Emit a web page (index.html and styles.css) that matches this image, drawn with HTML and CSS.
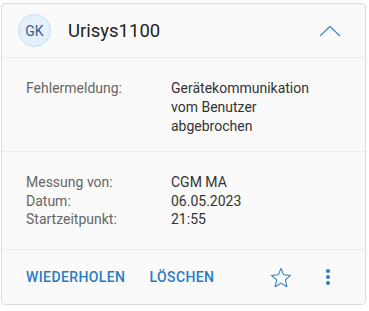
FILE: index.html
```html
<!DOCTYPE html>
<html lang="de">
<head>
 <meta charset="UTF-8">
 <title>Urisys1100</title>
 <link rel="stylesheet" href="styles.css">
</head>
<body>
 <div class="card">
  <div class="card-head">
   <span class="avatar">GK</span>
   <span class="title">Urisys1100</span>
   <svg class="chevron" width="22" height="12" viewBox="0 0 22 12"><path d="M1 11 L11 1.5 L21 11" fill="none" stroke="#4a8fd0" stroke-width="1.4"/></svg>
  </div>
  <div class="section error">
   <span class="label">Fehlermeldung:</span>
   <span class="value">Gerätekommunikation vom Benutzer abgebrochen</span>
  </div>
  <div class="section info">
   <span class="label">Messung von:</span><span class="value">CGM MA</span>
   <span class="label">Datum:</span><span class="value">06.05.2023</span>
   <span class="label">Startzeitpunkt:</span><span class="value">21:55</span>
  </div>
  <div class="card-actions">
   <a class="btn" href="#">WIEDERHOLEN</a>
   <a class="btn" href="#">LÖSCHEN</a>
   <span class="spacer"></span>
   <svg class="star" width="22" height="21" viewBox="0 0 24 23"><path d="M12 1.5 L14.9 8.6 L22.5 9.2 L16.7 14.1 L18.5 21.6 L12 17.6 L5.5 21.6 L7.3 14.1 L1.5 9.2 L9.1 8.6 Z" fill="none" stroke="#2b7bbf" stroke-width="1.1" stroke-linejoin="round"/></svg>
   <svg class="more" width="6" height="18" viewBox="0 0 6 18"><circle cx="3" cy="3" r="2" fill="#2b7bbf"/><circle cx="3" cy="9" r="2" fill="#2b7bbf"/><circle cx="3" cy="15" r="2" fill="#2b7bbf"/></svg>
  </div>
 </div>
</body>
</html>
```
FILE: styles.css
```css
body {
 margin: 0;
 padding: 3px 3px 0 1px;
 background: #fff;
 font-family: Roboto, "Liberation Sans", sans-serif;
}

.card {
 width: 365px;
 height: 302px;
 box-sizing: border-box;
 border: 1px solid #dcdcdc;
 border-radius: 4px;
 background: #fafafa;
 display: flex;
 flex-direction: column;
}

.card-head {
 display: flex;
 align-items: center;
 height: 53px;
 padding: 0 24px 0 16px;
 border-bottom: 1px solid #ebebeb;
}

.avatar {
 width: 31px;
 height: 31px;
 border-radius: 50%;
 background: #e4f0fc;
 border: 1px solid #c9def3;
 color: #3d5e8e;
 font-size: 14px;
 display: flex;
 align-items: center;
 justify-content: center;
}

.title {
 flex: 1;
 margin-left: 17px;
 font-size: 18.5px;
 color: #222;
}

.section {
 display: grid;
 grid-template-columns: 145px 165px;
 padding: 0 24px;
 font-size: 14px;
 border-bottom: 1px solid #ebebeb;
 box-sizing: border-box;
}

.error {
 padding-top: 21px;
 height: 94px;
 line-height: 19px;
}

.info {
 padding-top: 21px;
 height: 98px;
 line-height: 18.5px;
 align-content: start;
}

.label {
 color: #666;
}

.value {
 color: #333;
}

.card-actions {
 flex: 1;
 display: flex;
 align-items: center;
 padding: 0 34px 0 24px;
}

.btn {
 color: #2b7bbf;
 text-decoration: none;
 font-size: 14px;
 font-weight: 500;
 letter-spacing: 0.4px;
 margin-right: 24px;
}

.spacer {
 flex: 1;
}

.star {
 margin-right: 33px;
}
```
